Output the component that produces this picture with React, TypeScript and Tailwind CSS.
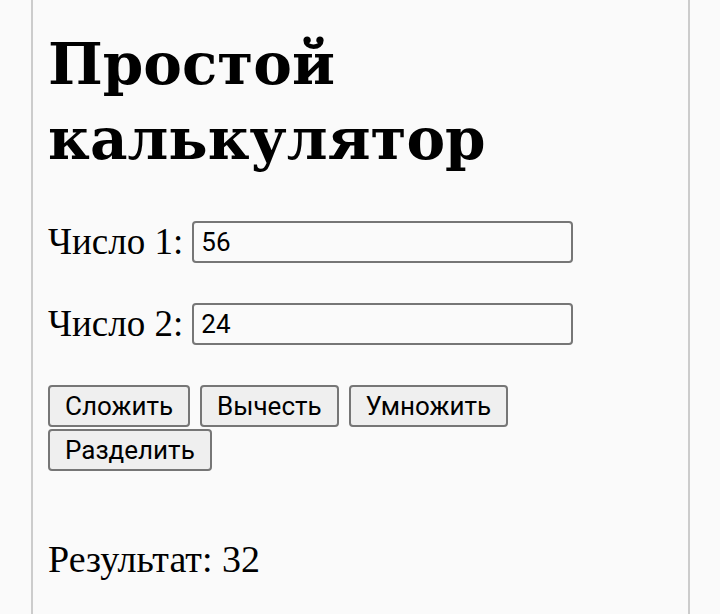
import { useState } from 'react';

const heading = "font-['DejaVu_Serif','Liberation_Serif',serif]";
const serif = "font-['Liberation_Serif','DejaVu_Serif',serif]";
const sans = "font-['Roboto','Noto_Sans',sans-serif]";

export default function App() {
  const [a, setA] = useState('56');
  const [b, setB] = useState('24');
  const [result, setResult] = useState<string>('32');

  const calc = (op: string) => {
    const x = parseFloat(a);
    const y = parseFloat(b);
    if (isNaN(x) || isNaN(y)) return setResult('ошибка');
    if (op === '+') setResult(String(x + y));
    if (op === '-') setResult(String(x - y));
    if (op === '*') setResult(String(x * y));
    if (op === '/') setResult(y === 0 ? 'деление на ноль' : String(x / y));
  };

  const buttons = [
    { label: 'Сложить', op: '+' },
    { label: 'Вычесть', op: '-' },
    { label: 'Умножить', op: '*' },
    { label: 'Разделить', op: '/' },
  ];

  return (
    <div className="min-h-screen bg-[#fafafa] text-black">
      <div className={`ml-[31px] w-[659px] min-h-screen border-x-2 border-[#cccccc] px-[15px] ${serif}`}>
        <h1 className={`pt-[27px] text-[58px] leading-[75px] font-bold ${heading}`}>Простой калькулятор</h1>

        <div className="mt-[44px] flex items-center gap-[9px]">
          <label className="text-[37px] leading-[42px]">Число 1:</label>
          <input
            value={a}
            onChange={e => setA(e.target.value)}
            className={`h-[42px] w-[381px] rounded-[4px] border-2 border-[#767676] bg-[#fafafa] px-[7px] text-[26px] ${sans}`}
          />
        </div>

        <div className="mt-[40px] flex items-center gap-[9px]">
          <label className="text-[37px] leading-[42px]">Число 2:</label>
          <input
            value={b}
            onChange={e => setB(e.target.value)}
            className={`h-[42px] w-[381px] rounded-[4px] border-2 border-[#767676] bg-[#fafafa] px-[7px] text-[26px] ${sans}`}
          />
        </div>

        <div className="mt-[40px] flex w-[480px] flex-wrap gap-x-[10px] gap-y-[2px]">
          {buttons.map(btn => (
            <button
              key={btn.op}
              onClick={() => calc(btn.op)}
              className={`h-[42px] rounded-[4px] border-2 border-[#767676] bg-[#efefef] px-[15px] text-[26px] leading-none ${sans}`}
            >
              {btn.label}
            </button>
          ))}
        </div>

        <p className="mt-[67px] text-[38px] leading-[42px]">Результат: {result}</p>
      </div>
    </div>
  );
}
